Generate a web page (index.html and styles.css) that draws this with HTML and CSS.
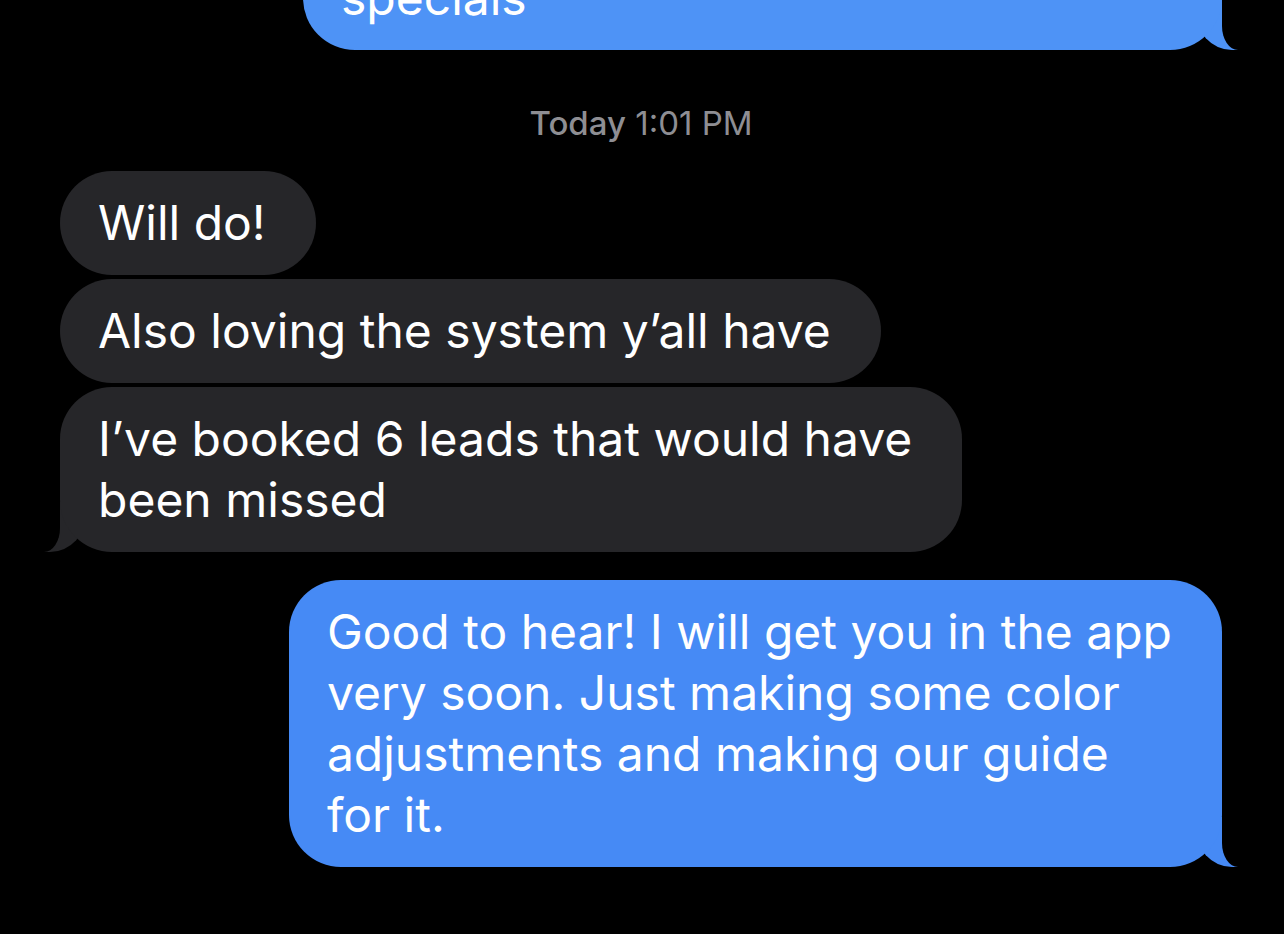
FILE: index.html
```html
<!DOCTYPE html>
<html lang="en">
<head>
    <meta charset="UTF-8">
    <meta name="viewport" content="width=device-width, initial-scale=1.0">
    <title>Messages</title>
    <link rel="stylesheet" href="styles.css">
</head>
<body>
<div class="thread">
    <div class="bubble sent earlier tail">specials</div>

    <div class="timestamp"><span class="day">Today</span> 1:01 PM</div>

    <div class="bubble received">Will do!</div>
    <div class="bubble received">Also loving the system y’all have</div>
    <div class="bubble received tail">I’ve booked 6 leads that would have<br>been missed</div>

    <div class="bubble sent tail">Good to hear! I will get you in the app<br>very soon. Just making some color<br>adjustments and making our guide<br>for it.</div>
</div>
</body>
</html>
```

FILE: styles.css
```css
body {
    margin: 0;
    background-color: #000000;
    font-family: 'Inter', 'Noto Sans', sans-serif;
    color: #ffffff;
    height: 934px;
    overflow: hidden;
}

.thread {
    display: flex;
    flex-direction: column;
    padding: 0 62px 0 60px;
}

.bubble {
    position: relative;
    padding: 21px 50px 22px 38px;
    border-radius: 52px;
    font-size: 48px;
    line-height: 61px;
    white-space: nowrap;
}

.sent {
    align-self: flex-end;
    background-color: #468af5;
    margin-top: 28px;
}

/* last line of an earlier message, scrolled mostly out of view */
.sent.earlier {
    width: 831px;
    background-color: #4e93f6;
    margin-top: -54px;
}

.received {
    align-self: flex-start;
    background-color: #262629;
}

.received + .received {
    margin-top: 4px;
}

.timestamp {
    margin: 53px 0 28px;
    text-align: center;
    font-size: 33px;
    line-height: 40px;
    color: #8e8e93;
}

.timestamp .day {
    font-weight: 500;
}

/* tails */
.tail::before,
.tail::after {
    content: "";
    position: absolute;
    bottom: 0;
    height: 50px;
    z-index: -1;
}

.sent.tail::before {
    right: -18px;
    width: 45px;
    background: inherit;
    border-bottom-left-radius: 37px 40px;
}

.sent.tail::after {
    right: -40px;
    width: 40px;
    background-color: #000000;
    border-bottom-left-radius: 16px 24px;
}

.received.tail::before {
    left: -18px;
    width: 45px;
    background: inherit;
    border-bottom-right-radius: 37px 40px;
}

.received.tail::after {
    left: -40px;
    width: 40px;
    background-color: #000000;
    border-bottom-right-radius: 16px 24px;
}
```
